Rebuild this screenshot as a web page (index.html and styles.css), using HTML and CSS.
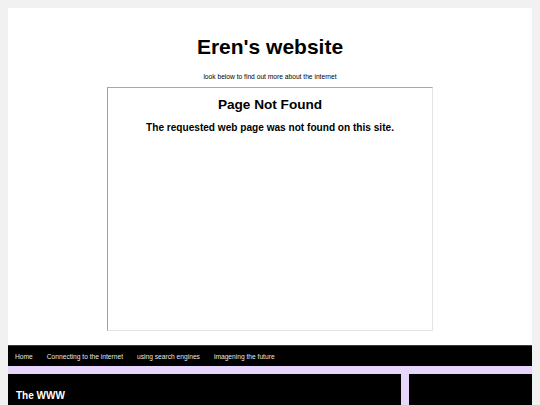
FILE: index.html
```html
<!DOCTYPE html>
<html lang="en">
<head>
<meta charset="utf-8">
<title>Eren's website</title>
<link rel="stylesheet" href="styles.css">
</head>
<body>
<div class="page">
  <header class="header">
    <h1 class="title">Eren's website</h1>
    <p class="subtitle">look below to find out more about the internet</p>
    <div class="frame">
      <h1 class="frame-title">Page Not Found</h1>
      <p class="frame-text">The requested web page was not found on this site.</p>
    </div>
  </header>
  <nav class="nav">
    <a class="nav-link" href="#">Home</a>
    <a class="nav-link" href="#">Connecting to the internet</a>
    <a class="nav-link" href="#">using search engines</a>
    <a class="nav-link" href="#">imagening the future</a>
  </nav>
  <div class="row">
    <main class="main">
      <h2 class="main-title">The WWW</h2>
    </main>
    <aside class="side"></aside>
  </div>
</div>
</body>
</html>
```

FILE: styles.css
```css
* { box-sizing: border-box; }
html, body { margin: 0; padding: 0; }
body {
  background: #f1f1f1;
  font-family: "Liberation Sans", Arial, sans-serif;
  color: #000;
  padding: 8px;
}
.page {
  background: #fff;
  display: flex;
  flex-direction: column;
}
.header {
  display: flex;
  flex-direction: column;
  align-items: center;
  padding-top: 27px;
  padding-bottom: 14px;
}
.title {
  margin: 0;
  font-size: 21px;
  line-height: 24px;
  font-weight: bold;
}
.subtitle {
  margin: 13px 0 0;
  font-size: 6.67px;
  line-height: 10px;
}
.frame {
  margin-top: 5px;
  width: 326px;
  height: 244px;
  border-style: solid;
  border-width: 1px;
  border-top-color: #a8a8a8;
  border-left-color: #a0a0a0;
  border-right-color: #e4e4e4;
  border-bottom-color: #e4e4e4;
  display: flex;
  flex-direction: column;
  align-items: center;
}
.frame-title {
  margin: 9px 0 0;
  font-size: 13.6px;
  line-height: 16px;
  font-weight: bold;
}
.frame-text {
  margin: 9px 0 0;
  font-size: 10.1px;
  line-height: 12px;
  font-weight: bold;
}
.nav {
  background: #000;
  border-top: 1px solid #3a3a3a;
  height: 21px;
  display: flex;
  align-items: center;
}
.nav-link {
  color: #e6e6e6;
  text-decoration: none;
  font-size: 6.67px;
  padding: 0 7px;
}
.row {
  background: #e6d6fb;
  padding-top: 8px;
  display: flex;
  gap: 8px;
  min-height: 60px;
}
.main {
  background: #000;
  width: 393px;
  padding: 16px 8px 0;
  min-height: 60px;
}
.main-title {
  margin: 0;
  color: #fff;
  font-size: 10px;
  line-height: 12px;
  font-weight: bold;
}
.side {
  background: #000;
  flex: 1;
}
```
